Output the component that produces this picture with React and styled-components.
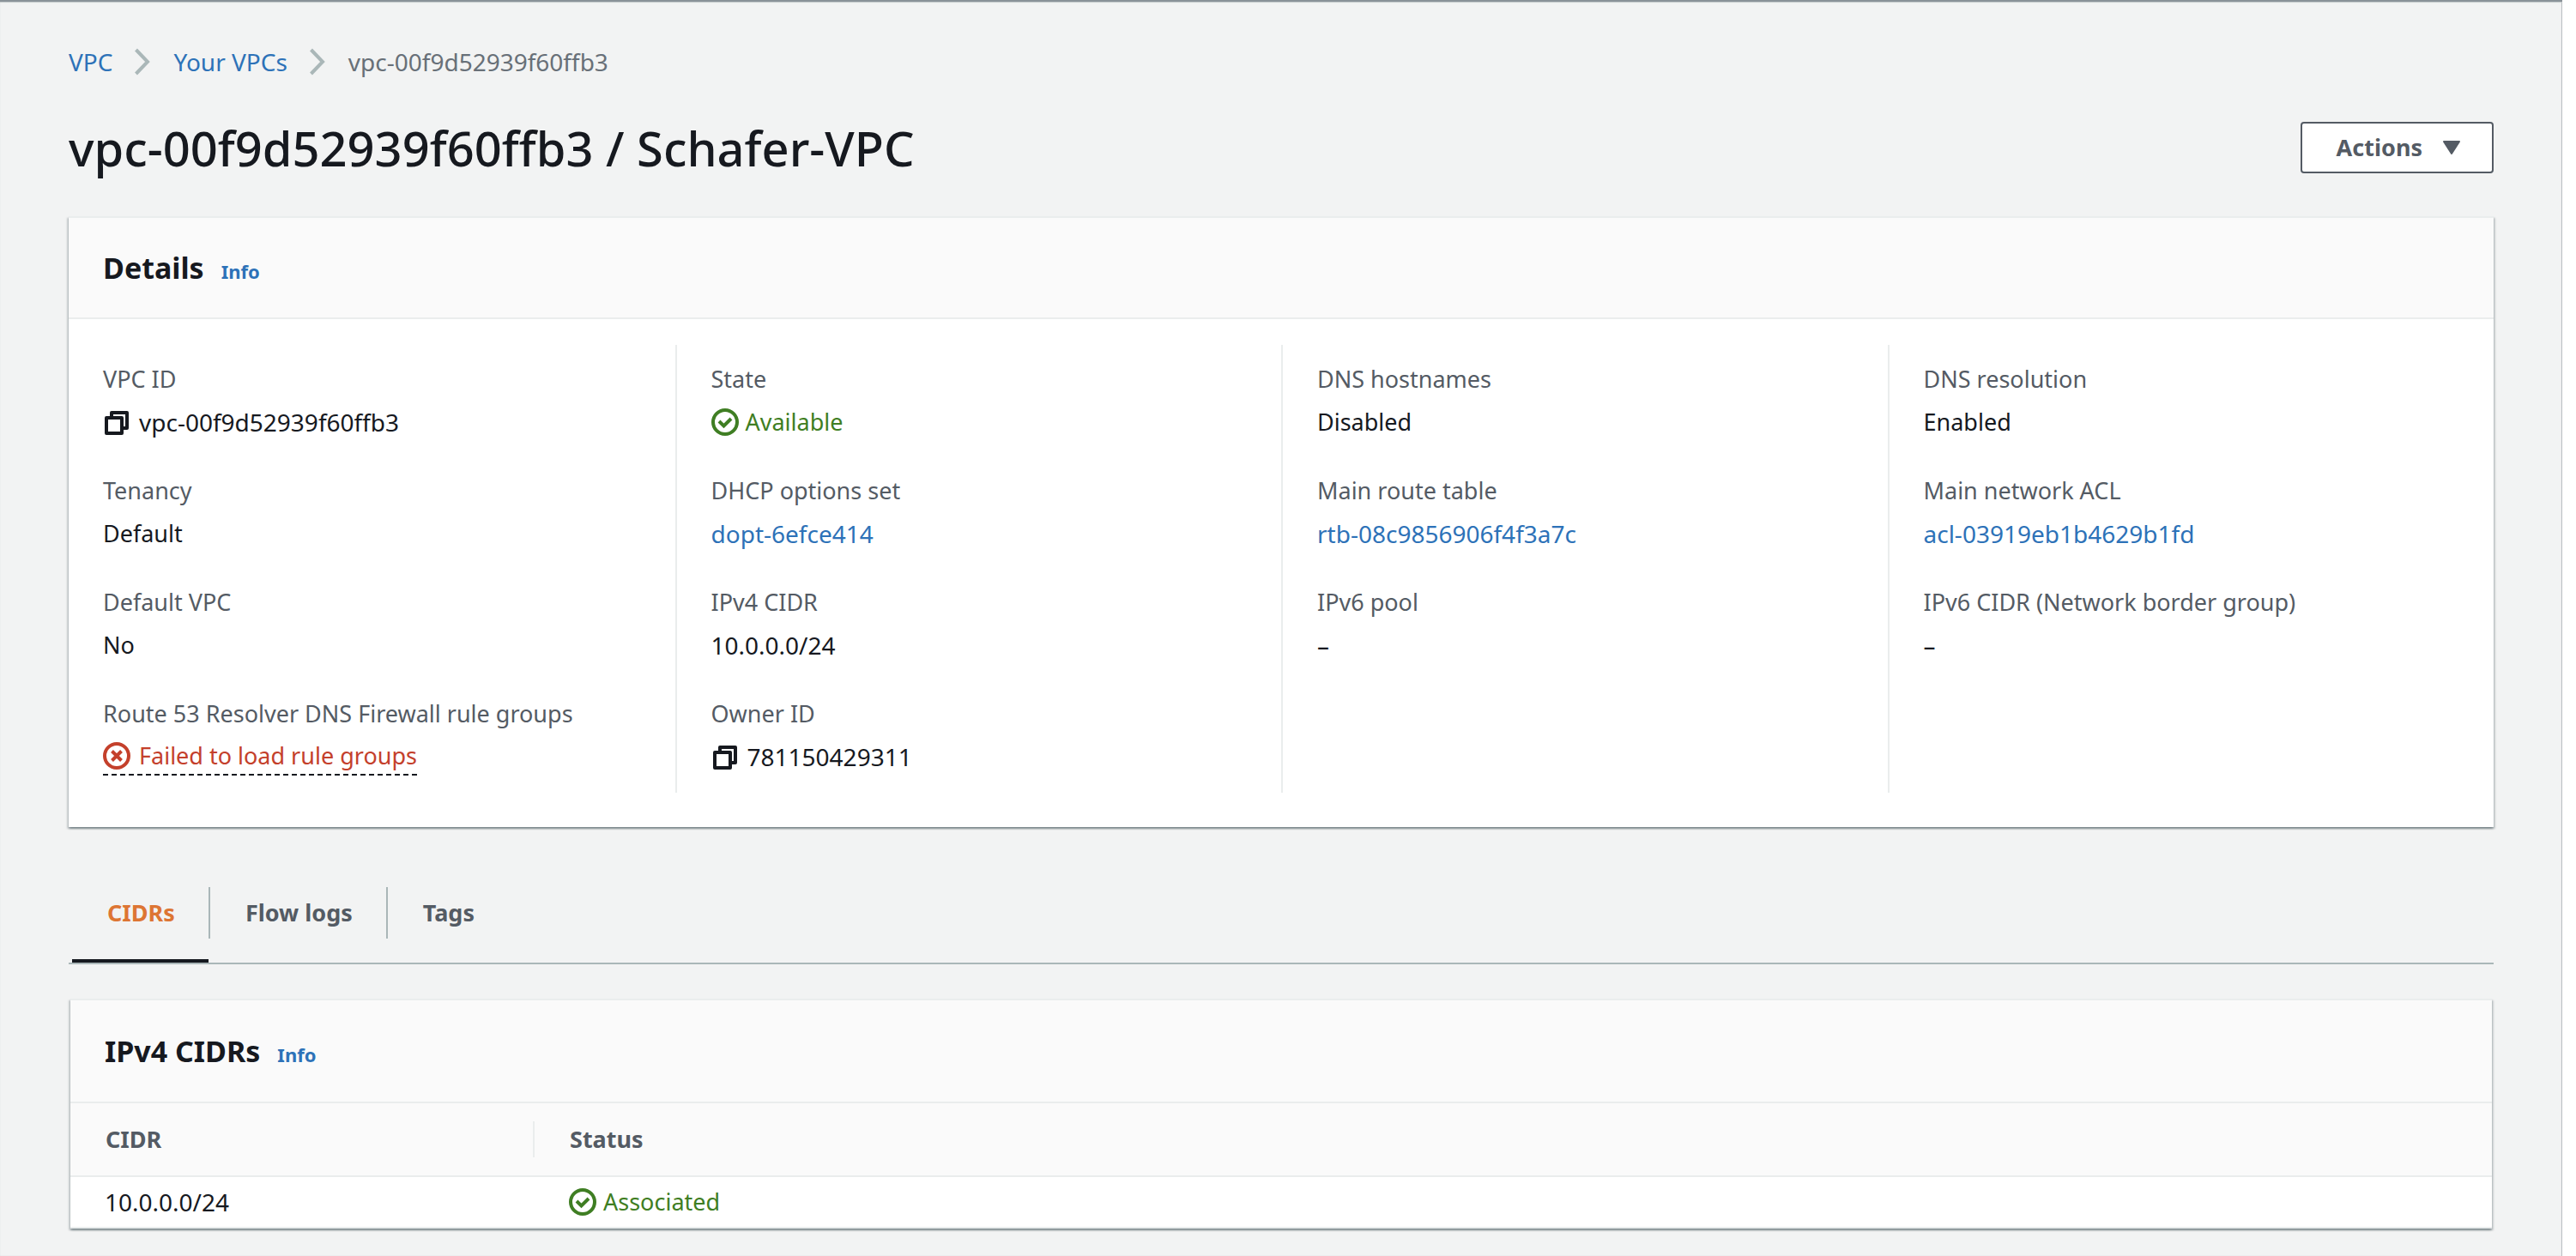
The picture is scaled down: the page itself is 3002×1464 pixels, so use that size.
import React from "react";
import styled, { createGlobalStyle } from "styled-components";

const color = {
  page: "#f2f3f3",
  text: "#16191f",
  muted: "#545b64",
  crumb: "#687078",
  link: "#2d72b8",
  success: "#3f7e23",
  error: "#c4402b",
  active: "#dd7533",
  rule: "#eaeded",
  line: "#aab7b8",
};

const GlobalStyle = createGlobalStyle`
  *, *::before, *::after { box-sizing: border-box; }
  body {
    margin: 0;
    background: #fff;
    color: ${color.text};
    font: 400 28px/44px "Noto Sans", "Open Sans", sans-serif;
  }
  h1, h2, dl, dd, ul, ol { margin: 0; padding: 0; }
  button { font: inherit; color: inherit; background: none; border: 0; padding: 0; cursor: pointer; }
  svg { display: block; flex: none; }
`;

const Shell = styled.div`
  display: flex;
  min-height: 100vh;
  padding-right: 16px;
`;

const Page = styled.main`
  flex: 1;
  min-width: 0;
  padding: 50px 80px 32px;
  background: ${color.page};
  box-shadow: inset 0 2px 0 #899298, inset 0 3px 1px #c3c8ca, inset -1px 0 1px #b4babd;
`;

const Crumbs = styled.ol`
  display: flex;
  align-items: center;
  list-style: none;
  color: ${color.crumb};
`;

const Crumb = styled.li`
  display: flex;
  align-items: center;
  gap: 26px;
  margin-right: 27px;
`;

const Link = styled.a`
  color: ${color.link};
  text-decoration: none;
`;

const TitleBar = styled.header`
  display: flex;
  justify-content: space-between;
  align-items: center;
  margin: 48px 0 50px;
`;

const Title = styled.h1`
  font-size: 56px;
  font-weight: 500;
  line-height: 60px;
`;

const ActionsButton = styled.button`
  display: flex;
  align-items: center;
  gap: 24px;
  height: 60px;
  padding: 0 37px 0 40px;
  border: 2px solid ${color.muted};
  border-radius: 4px;
  background: #fff;
  color: ${color.muted};
  font-size: 27px;
  font-weight: 700;
`;

const Card = styled.section`
  margin: 0 ${(p) => (p.$inset ? "2px" : "0")};
  border-top: 2px solid ${color.rule};
  background: #fff;
  box-shadow: 0 2px 2px rgba(0, 28, 36, 0.3), 2px 2px 2px rgba(0, 28, 36, 0.15),
    -2px 2px 2px rgba(0, 28, 36, 0.15);
`;

const CardHeader = styled.div`
  display: flex;
  align-items: baseline;
  gap: 20px;
  padding: ${(p) => (p.$tall ? "37px" : "36px")} 40px;
  border-bottom: 2px solid ${color.rule};
  background: #fafafa;
`;

const CardTitle = styled.h2`
  font-size: 34px;
  font-weight: 700;
  line-height: 44px;
`;

const InfoLink = styled(Link)`
  font-size: 22px;
  font-weight: 700;
  line-height: 30px;
`;

const Columns = styled.div`
  display: grid;
  grid-template-columns: repeat(4, minmax(0, 1fr));
  padding: 30px 0 40px;
`;

const Column = styled.dl`
  display: flex;
  flex-direction: column;
  gap: 36px;
  padding: 18px 40px 20px;

  & + & { border-left: 2px solid ${color.rule}; }
`;

const Field = styled.div`
  display: flex;
  flex-direction: column;
  align-items: flex-start;
  gap: 6px;
`;

const Label = styled.dt`
  color: ${color.muted};
  font-size: 27px;
  white-space: nowrap;
`;

const Value = styled.dd`
  display: flex;
  align-items: center;
  gap: 10px;
`;

const Word = styled.span`
  font-size: 27px;
`;

const Status = styled.span`
  display: flex;
  align-items: center;
  gap: 8px;
  color: ${color.success};
  font-size: 27px;
`;

const ErrorTrigger = styled.button`
  display: flex;
  align-items: center;
  gap: 10px;
  height: 44px;
  border-bottom: 2px dashed ${color.text};
  color: ${color.error};
  font-size: 27px;
`;

const Tabs = styled.ul`
  display: flex;
  margin: 40px 0;
  padding-left: 4px;
  border-bottom: 2px solid ${color.line};
  list-style: none;
`;

const TabItem = styled.li`
  display: flex;

  &:not(:last-child)::after {
    content: "";
    width: 2px;
    height: 60px;
    margin-top: 30px;
    background: ${color.line};
  }
`;

const Tab = styled.button`
  padding: 30px 39px 24px 41px;
  border-bottom: 4px solid ${(p) => (p.$active ? color.text : "transparent")};
  color: ${(p) => (p.$active ? color.active : color.muted)};
  font-size: 27px;
  font-weight: 700;
  line-height: 60px;
`;

const Table = styled.table`
  width: 100%;
  border-collapse: separate;
  border-spacing: 0;
  text-align: left;
`;

const HeadCell = styled.th`
  width: ${(p) => p.$width || "auto"};
  padding: 21px 0;
  border-bottom: 2px solid ${color.rule};
  background: #fafafa;
  color: ${color.muted};
  font-size: 27px;
  font-weight: 700;
  line-height: 42px;
`;

const HeadLabel = styled.div`
  padding: 0 41px;
  border-right: ${(p) => (p.$divided ? `2px solid ${color.rule}` : "0")};
`;

const Cell = styled.td`
  height: 60px;
  padding: 0 40px;
  border-bottom: 2px solid ${color.rule};
`;

const CopyIcon = () => (
  <svg width="32" height="32" viewBox="0 0 32 32" fill="none" stroke="currentColor" strokeWidth="4" strokeLinejoin="round" aria-hidden="true">
    <path d="M4 11h18v18H4z" />
    <path d="M10 11V5h18v18h-6" />
  </svg>
);

const CheckIcon = () => (
  <svg width="32" height="32" viewBox="0 0 32 32" fill="none" stroke="currentColor" strokeWidth="4" aria-hidden="true">
    <circle cx="16" cy="16" r="14" />
    <path d="M9 15l5.500 5.500 8.500-8.500" />
  </svg>
);

const ErrorIcon = () => (
  <svg width="32" height="32" viewBox="0 0 32 32" fill="none" stroke="currentColor" strokeWidth="4" aria-hidden="true">
    <circle cx="16" cy="16" r="14" />
    <path d="M10.500 10.500l11 11M21.500 10.500l-11 11" />
  </svg>
);

const Chevron = () => (
  <svg width="18" height="32" viewBox="0 0 18 32" fill="none" stroke={color.line} strokeWidth="4" aria-hidden="true">
    <path d="M1.500 2l13.500 14-13.500 14" />
  </svg>
);

const Caret = () => (
  <svg width="20" height="16" viewBox="0 0 20 16" fill="currentColor" stroke="currentColor" strokeWidth="2" strokeLinejoin="round" aria-hidden="true">
    <path d="M1 1h18l-9 14z" />
  </svg>
);

const Copyable = ({ children }) => (
  <>
    <button type="button" aria-label="Copy">
      <CopyIcon />
    </button>
    {children}
  </>
);

const Ok = ({ children }) => (
  <Status>
    <CheckIcon />
    {children}
  </Status>
);

const details = [
  [
    ["VPC ID", <Copyable>vpc-00f9d52939f60ffb3</Copyable>],
    ["Tenancy", <Word>Default</Word>],
    ["Default VPC", <Word>No</Word>],
    [
      "Route 53 Resolver DNS Firewall rule groups",
      <ErrorTrigger type="button">
        <ErrorIcon />
        Failed to load rule groups
      </ErrorTrigger>,
    ],
  ],
  [
    ["State", <Ok>Available</Ok>],
    ["DHCP options set", <Link href="#dhcp">dopt-6efce414</Link>],
    ["IPv4 CIDR", "10.0.0.0/24"],
    ["Owner ID", <Copyable>781150429311</Copyable>],
  ],
  [
    ["DNS hostnames", <Word>Disabled</Word>],
    ["Main route table", <Link href="#route-table">rtb-08c9856906f4f3a7c</Link>],
    ["IPv6 pool", "–"],
  ],
  [
    ["DNS resolution", <Word>Enabled</Word>],
    ["Main network ACL", <Link href="#acl">acl-03919eb1b4629b1fd</Link>],
    ["IPv6 CIDR (Network border group)", "–"],
  ],
];

const tabs = ["CIDRs", "Flow logs", "Tags"];

export default function App() {
  return (
    <Shell>
      <GlobalStyle />
      <Page>
        <nav aria-label="Breadcrumb">
          <Crumbs>
            <Crumb>
              <Link href="#vpc">VPC</Link>
              <Chevron />
            </Crumb>
            <Crumb>
              <Link href="#vpcs">Your VPCs</Link>
              <Chevron />
            </Crumb>
            <Crumb>vpc-00f9d52939f60ffb3</Crumb>
          </Crumbs>
        </nav>
        <TitleBar>
          <Title>vpc-00f9d52939f60ffb3 / Schafer-VPC</Title>
          <ActionsButton type="button">
            Actions
            <Caret />
          </ActionsButton>
        </TitleBar>

        <Card>
          <CardHeader>
            <CardTitle>Details</CardTitle>
            <InfoLink href="#details-info">Info</InfoLink>
          </CardHeader>
          <Columns>
            {details.map((fields) => (
              <Column key={fields[0][0]}>
                {fields.map(([label, value]) => (
                  <Field key={label}>
                    <Label>{label}</Label>
                    <Value>{value}</Value>
                  </Field>
                ))}
              </Column>
            ))}
          </Columns>
        </Card>

        <Tabs role="tablist">
          {tabs.map((name, i) => (
            <TabItem key={name} role="presentation">
              <Tab type="button" role="tab" aria-selected={i === 0} $active={i === 0}>
                {name}
              </Tab>
            </TabItem>
          ))}
        </Tabs>

        <Card $inset>
          <CardHeader $tall>
            <CardTitle>IPv4 CIDRs</CardTitle>
            <InfoLink href="#cidrs-info">Info</InfoLink>
          </CardHeader>
          <Table>
            <thead>
              <tr>
                <HeadCell scope="col" $width="541px">
                  <HeadLabel $divided>CIDR</HeadLabel>
                </HeadCell>
                <HeadCell scope="col">
                  <HeadLabel>Status</HeadLabel>
                </HeadCell>
              </tr>
            </thead>
            <tbody>
              <tr>
                <Cell>10.0.0.0/24</Cell>
                <Cell>
                  <Ok>Associated</Ok>
                </Cell>
              </tr>
            </tbody>
          </Table>
        </Card>
      </Page>
    </Shell>
  );
}
